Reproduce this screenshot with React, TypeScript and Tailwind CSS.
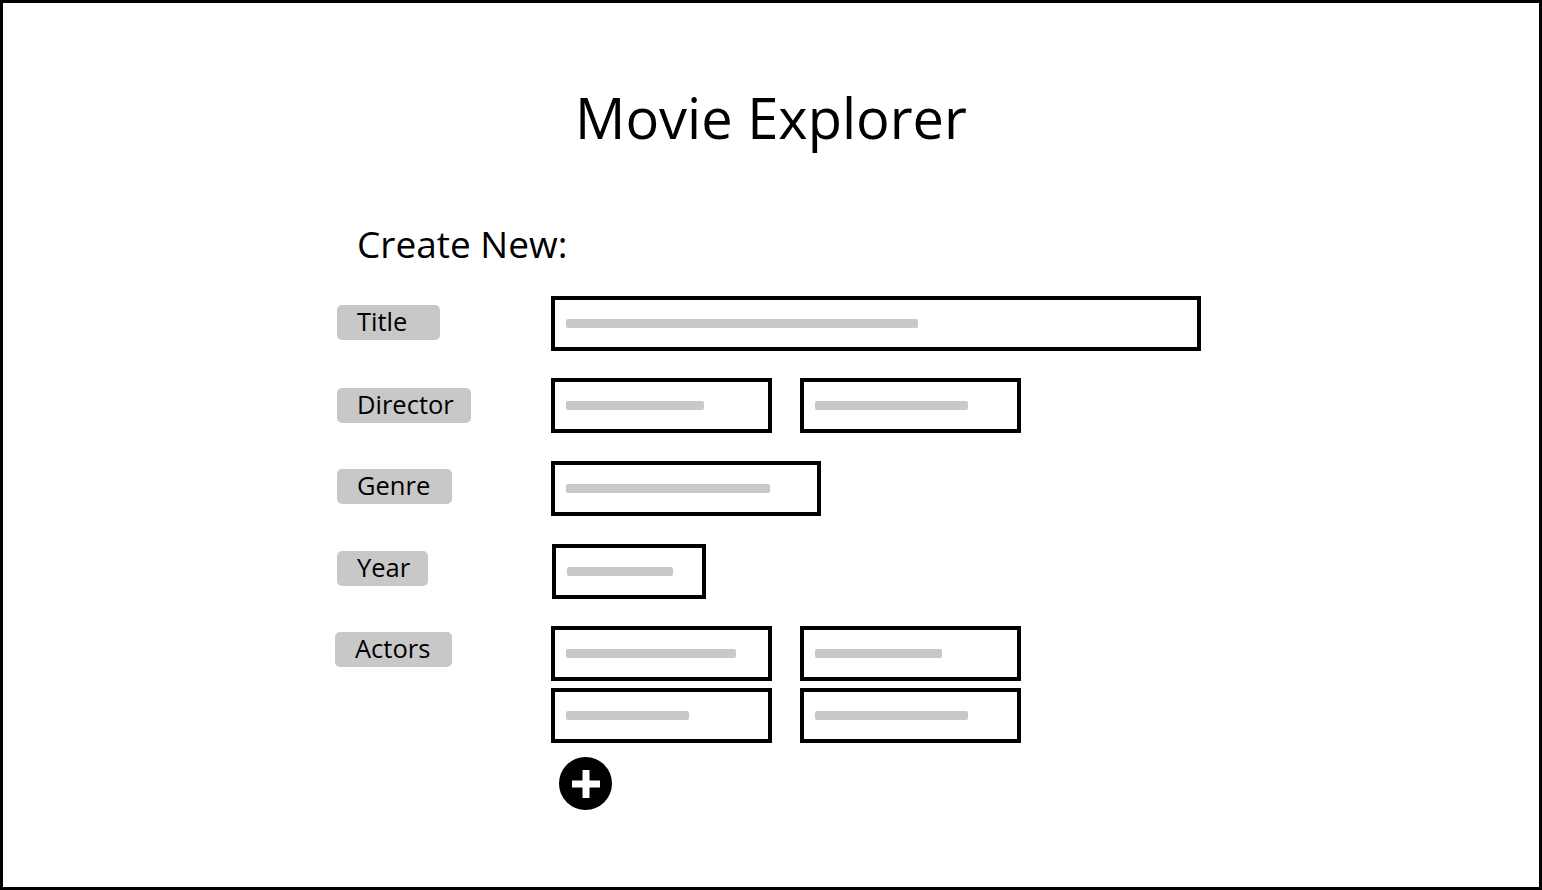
import React from "react";

type Field = { box: string; bar: string };
type Row = {
  label: string;
  pill: string;
  rowGap: string;
  pillTop: string;
  lines: Field[][];
};

const rows: Row[] = [
  {
    label: "Title",
    pill: "w-[103px]",
    rowGap: "mt-[0px]",
    pillTop: "mt-[9px]",
    lines: [[{ box: "w-[650px]", bar: "w-[352px]" }]],
  },
  {
    label: "Director",
    pill: "w-[134px]",
    rowGap: "mt-[27px]",
    pillTop: "mt-[10px]",
    lines: [
      [
        { box: "w-[221px]", bar: "w-[138px]" },
        { box: "w-[221px]", bar: "w-[153px]" },
      ],
    ],
  },
  {
    label: "Genre",
    pill: "w-[115px]",
    rowGap: "mt-[28px]",
    pillTop: "mt-[8px]",
    lines: [[{ box: "w-[270px]", bar: "w-[204px]" }]],
  },
  {
    label: "Year",
    pill: "w-[91px]",
    rowGap: "mt-[28px]",
    pillTop: "mt-[7px]",
    lines: [[{ box: "w-[154px] ml-[1px] h-[54px]", bar: "w-[106px]" }]],
  },
  {
    label: "Actors",
    pill: "w-[117px] -ml-[2px]",
    rowGap: "mt-[27px]",
    pillTop: "mt-[6px]",
    lines: [
      [
        { box: "w-[221px]", bar: "w-[170px]" },
        { box: "w-[221px]", bar: "w-[127px]" },
      ],
      [
        { box: "w-[221px]", bar: "w-[123px]" },
        { box: "w-[221px]", bar: "w-[153px]" },
      ],
    ],
  },
];

const Input = ({ box, bar }: Field) => (
  <div className={`h-[55px] ${box} border-[4px] border-black bg-white flex items-center pl-[11px]`}>
    <div className={`${bar} h-[9px] rounded-[2px] bg-[#c8c8c8]`} />
  </div>
);

const PlusButton = () => (
  <button className="w-[53px] h-[53px] rounded-full bg-black flex items-center justify-center">
    <svg width="28" height="28" viewBox="0 0 28 28">
      <rect x="10.5" y="0" width="7" height="28" fill="white" />
      <rect x="0" y="10.5" width="28" height="7" fill="white" />
    </svg>
  </button>
);

export default function App() {
  return (
    <div
      className="w-full h-[890px] border-[3px] border-black bg-white text-black"
      style={{ fontFamily: "'Open Sans', Lato, sans-serif" }}
    >
      <h1 className="pt-[86px] text-center text-[56px] leading-none font-normal">Movie Explorer</h1>

      <div className="ml-[334px] mt-[80px]">
        <h2 className="ml-[20px] text-[37px] leading-none font-normal">Create New:</h2>

        <div className="mt-[34px] flex flex-col">
          {rows.map((row) => (
            <div key={row.label} className={`${row.rowGap} flex items-start`}>
              <div className="w-[214px] shrink-0">
                <div
                  className={`${row.pill} ${row.pillTop} h-[35px] rounded-[5px] bg-[#c8c8c8] pl-[20px] text-[25.5px] leading-[32px]`}
                >
                  {row.label}
                </div>
              </div>
              <div className="flex flex-col gap-[7px]">
                {row.lines.map((line, i) => (
                  <div key={i} className="flex gap-[28px]">
                    {line.map((f, j) => (
                      <Input key={j} {...f} />
                    ))}
                  </div>
                ))}
              </div>
            </div>
          ))}
        </div>

        <div className="ml-[222px] mt-[14px]">
          <PlusButton />
        </div>
      </div>
    </div>
  );
}
